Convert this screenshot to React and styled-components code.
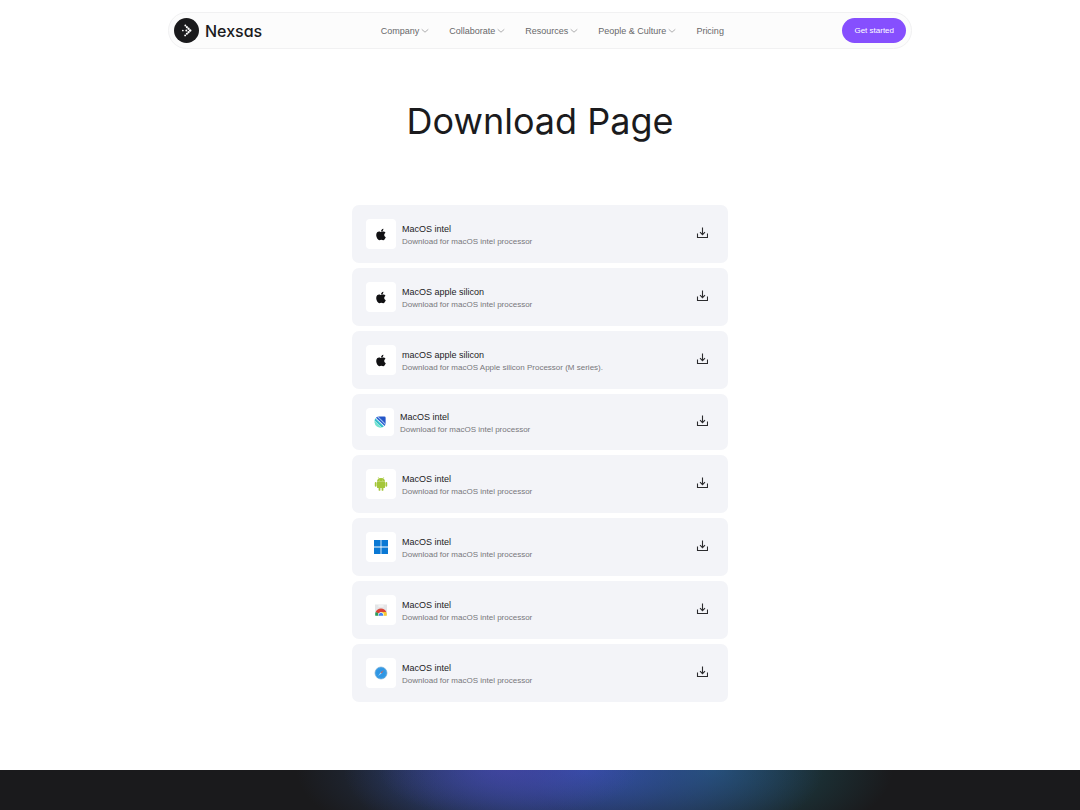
import styled, { createGlobalStyle } from "styled-components";

const GlobalStyle = createGlobalStyle`
    * {
        box-sizing: border-box;
    }

    body {
        margin: 0;
        background-color: #FFFFFF;
        color: #1B1B1D;
        font-family: "Liberation Sans", Arial, sans-serif;
    }
`;

const menu = [
    { label: "Company", dropdown: true },
    { label: "Collaborate", dropdown: true },
    { label: "Resources", dropdown: true },
    { label: "People & Culture", dropdown: true },
    { label: "Pricing", dropdown: false },
];

const downloads = [
    { id: 1, icon: "apple", title: "MacOS intel", text: "Download for macOS intel processor" },
    { id: 2, icon: "apple", title: "MacOS apple silicon", text: "Download for macOS intel processor" },
    { id: 3, icon: "apple", title: "macOS apple silicon", text: "Download for macOS Apple silicon Processor (M series)." },
    { id: 4, icon: "stripes", title: "MacOS intel", text: "Download for macOS intel processor", small: true },
    { id: 5, icon: "android", title: "MacOS intel", text: "Download for macOS intel processor" },
    { id: 6, icon: "windows", title: "MacOS intel", text: "Download for macOS intel processor" },
    { id: 7, icon: "store", title: "MacOS intel", text: "Download for macOS intel processor" },
    { id: 8, icon: "safari", title: "MacOS intel", text: "Download for macOS intel processor" },
];

function LogoMark() {
    return (
        <svg width="25" height="25" viewBox="0 0 26 26" aria-hidden="true">
            <circle cx="13" cy="13" r="13" fill="#1A1A1C" />
            <g fill="#FFFFFF">
                <circle cx="11.8" cy="7.8" r="1" />
                <circle cx="13.4" cy="9.5" r="1.1" />
                <circle cx="15.1" cy="11.2" r="1.2" />
                <circle cx="16.8" cy="13" r="1.3" />
                <circle cx="15.1" cy="14.8" r="1.2" />
                <circle cx="13.4" cy="16.4" r="1.1" />
                <circle cx="11.6" cy="18.1" r="1" />
                <circle cx="9.2" cy="13" r="0.9" />
                <circle cx="12.8" cy="13" r="1" />
            </g>
        </svg>
    );
}

function Chevron() {
    return (
        <svg width="8" height="8" viewBox="0 0 8 8" fill="none" stroke="#9A9A9C" strokeWidth="0.8" aria-hidden="true">
            <path d="M1 2.6 4 5.2 7 2.6" strokeLinecap="round" strokeLinejoin="round" />
        </svg>
    );
}

function DownloadIcon() {
    return (
        <svg width="12" height="12" viewBox="0 0 12 12" fill="none" stroke="#2B2B2E" aria-hidden="true">
            <path d="M1.500 6.500V10.500h10V6.500M6.500 0.500V7.500M4 5.200 6.500 7.700 9 5.200" strokeWidth="1.1" />
        </svg>
    );
}

function AppleIcon() {
    return (
        <svg width="12" height="13" viewBox="0 0 384 512" fill="#111113" aria-hidden="true">
            <path d="M318.700 268.700c-.2-36.700 16.400-64.400 50-84.800-18.800-26.900-47.200-41.700-84.700-44.600-35.500-2.800-74.300 20.700-88.500 20.700-15 0-49.400-19.700-76.400-19.700C63.300 141.200 4 184.800 4 273.500q0 39.300 14.400 81.200c12.800 36.700 59 126.700 107.200 125.200 25.200-.6 43-17.900 75.800-17.900 31.800 0 48.300 17.900 76.400 17.900 48.600-.7 90.400-82.500 102.600-119.300-65.200-30.700-61.700-90-61.700-91.900zm-56.600-164.200c27.300-32.400 24.800-61.900 24-72.500-24.100 1.400-52 16.400-67.900 34.900-17.500 19.800-27.800 44.300-25.600 71.900 26.100 2 49.900-11.400 69.500-34.300z" />
        </svg>
    );
}

function StripesIcon() {
    return (
        <svg width="12" height="12" viewBox="0 0 12 12" aria-hidden="true">
            <path d="M4 .6h6.400a1.200 1.200 0 0 1 1.200 1.200V8z" fill="#2456C8" />
            <path d="M4 .6 11.600 8l-.2.700L3.200.8z" fill="#9BBBF0" />
            <path d="M3.200.8 11.400 8.700 10.600 9.900 1.900 1.700z" fill="#2A62D2" />
            <path d="M1.300 2.300 9.900 10.500 7.800 11.500.5 4.500z" fill="#35BFCB" />
            <path d="M.5 4.700 7.500 11.500a5.800 5.800 0 0 1-7-5z" fill="#74E2CF" />
        </svg>
    );
}

function AndroidIcon() {
    return (
        <svg width="14" height="14" viewBox="0 0 14 14" fill="#A4C639" aria-hidden="true">
            <path d="M3 4.700a4 3.800 0 0 1 8 0z" />
            <path d="M4.300.4 5.400 2M9.700.4 8.600 2" stroke="#A4C639" strokeWidth="0.5" strokeLinecap="round" />
            <path d="M3 5.100h8v5.100a.9.9 0 0 1-.9.9H3.900a.9.9 0 0 1-.9-.9z" />
            <rect x="0.8" y="5" width="1.8" height="4.7" rx="0.9" />
            <rect x="11.4" y="5" width="1.8" height="4.7" rx="0.9" />
            <rect x="4.6" y="9.5" width="1.8" height="4.3" rx="0.9" />
            <rect x="7.6" y="9.5" width="1.8" height="4.3" rx="0.9" />
            <circle cx="5.2" cy="3.1" r="0.35" fill="#FFFFFF" />
            <circle cx="8.8" cy="3.1" r="0.35" fill="#FFFFFF" />
        </svg>
    );
}

function WindowsIcon() {
    return (
        <svg width="14" height="14" viewBox="0 0 14 14" fill="#0A78D4" aria-hidden="true">
            <path d="M0 0h6.600v6.600H0zM7.400 0H14v6.600H7.400zM0 7.400h6.600V14H0zM7.400 7.400H14V14H7.400z" />
        </svg>
    );
}

function StoreIcon() {
    return (
        <svg width="14" height="14" viewBox="0 0 14 14" aria-hidden="true">
            <path d="M1 1.500h12v10.600a.6.6 0 0 1-.6.6H1.600a.6.6 0 0 1-.6-.6z" fill="#E4E5E7" />
            <path d="M4.800 3h4.400" stroke="#FFFFFF" strokeWidth="0.9" strokeLinecap="round" />
            <path d="M1.700 9a5.700 5.700 0 0 1 10.600 0H7L4.500 10.800z" fill="#DB4437" />
            <path d="M1.700 9a6 6 0 0 0-.4 3.700H6L4.500 10.200z" fill="#2D9D5B" />
            <path d="M7 9h5.300a6 6 0 0 1 .4 3.700H8z" fill="#F7C934" />
            <path d="M4.300 12.700a2.800 2.800 0 1 1 5.400 0z" fill="#FFFFFF" />
            <path d="M4.900 12.700a2.200 2.200 0 1 1 4.200 0z" fill="#4285F4" />
        </svg>
    );
}

function SafariIcon() {
    return (
        <svg width="14" height="14" viewBox="0 0 14 14" aria-hidden="true">
            <circle cx="7" cy="7" r="6" fill="#2E96E4" stroke="#7DAFD4" strokeWidth="0.7" />
            <circle cx="7" cy="7" r="4.8" fill="none" stroke="#65BDF5" strokeWidth="0.5" strokeDasharray="0.4 0.8" />
            <path d="M9.900 4 7.600 7.600 6.500 6.500z" fill="#D0655F" />
            <path d="M4.100 10 6.500 6.500l1.100 1.100z" fill="#A9D8F7" />
        </svg>
    );
}

const icons = {
    apple: <AppleIcon />,
    stripes: <StripesIcon />,
    android: <AndroidIcon />,
    windows: <WindowsIcon />,
    store: <StoreIcon />,
    safari: <SafariIcon />,
};

function App() {
    return (
        <>
        <GlobalStyle />
        <Page>
            <Header>
                <Logo href="#">
                    <LogoMark />
                    Nexsas
                </Logo>
                <Nav>
                    {menu.map((item) => (
                        <NavLink href="#" key={item.label}>
                            {item.label}
                            {item.dropdown && <Chevron />}
                        </NavLink>
                    ))}
                </Nav>
                <StartButton>Get started</StartButton>
            </Header>
            <Main>
                <Title>Download Page</Title>
                <List>
                    {downloads.map((item) => (
                        <Row key={item.id}>
                            <IconTile $small={item.small}>{icons[item.icon]}</IconTile>
                            <RowBody>
                                <RowTitle>{item.title}</RowTitle>
                                <RowText>{item.text}</RowText>
                            </RowBody>
                            <DownloadButton aria-label={`Download ${item.title}`}>
                                <DownloadIcon />
                            </DownloadButton>
                        </Row>
                    ))}
                </List>
            </Main>
            <Footer />
        </Page>
        </>
    );
}

export default App;

const Page = styled.div`
    display: flex;
    flex-direction: column;
    min-height: 100vh;
    padding-top: 12px;
`;

const Header = styled.header`
    display: flex;
    align-items: center;
    justify-content: space-between;
    width: 100%;
    max-width: 744px;
    margin: 0 auto;
    padding: 5px;
    background-color: #FCFCFC;
    border: 1px solid #F1F1F2;
    border-radius: 20px;
`;

const Logo = styled.a`
    display: flex;
    align-items: center;
    gap: 6px;
    color: #1B1B1D;
    font-family: Inter, sans-serif;
    font-size: 16px;
    font-weight: 500;
    line-height: 24px;
    font-feature-settings: "cv11";
    text-decoration: none;
`;

const Nav = styled.nav`
    display: flex;
    align-items: center;
    gap: 20px;
`;

const NavLink = styled.a`
    display: flex;
    align-items: center;
    gap: 2px;
    color: #68686A;
    font-size: 9px;
    line-height: 12px;
    text-decoration: none;
`;

const StartButton = styled.button`
    height: 25px;
    padding: 0 12px;
    background-color: #864FFE;
    color: #FFFFFF;
    font-family: inherit;
    font-size: 8px;
    border: none;
    border-radius: 20px;
    cursor: pointer;
`;

const Main = styled.main`
    display: flex;
    flex-direction: column;
    align-items: center;
    padding: 48px 16px 68px;
`;

const Title = styled.h1`
    margin: 0 0 60px;
    font-family: Inter, sans-serif;
    font-size: 36px;
    font-weight: 400;
    line-height: 48px;
`;

const List = styled.ul`
    display: flex;
    flex-direction: column;
    gap: 5px;
    width: 100%;
    max-width: 376px;
    margin: 0;
    padding: 0;
    list-style: none;
`;

const Row = styled.li`
    display: flex;
    align-items: center;
    gap: 6px;
    padding: 14px;
    background-color: #F3F4F8;
    border-radius: 7px;
`;

const IconTile = styled.div`
    display: flex;
    align-items: center;
    justify-content: center;
    width: ${(props) => (props.$small ? "28px" : "30px")};
    height: ${(props) => (props.$small ? "28px" : "30px")};
    background-color: #FFFFFF;
    border-radius: 4px;
`;

const RowBody = styled.div`
    flex: 1;
    padding-top: 2px;
`;

const RowTitle = styled.h2`
    margin: 0;
    font-size: 9px;
    font-weight: 400;
    line-height: 14px;
`;

const RowText = styled.p`
    margin: 0;
    color: #77777B;
    font-size: 8px;
    line-height: 12px;
`;

const DownloadButton = styled.button`
    display: flex;
    padding: 4px 6px 6px;
    background: none;
    border: none;
    cursor: pointer;
`;

const Footer = styled.footer`
    flex: 1;
    min-height: 40px;
    background-color: #1A1A1C;
    background-image:
        radial-gradient(ellipse 130px 50px at 47% 0, rgba(76, 66, 170, 0.55), transparent),
        radial-gradient(ellipse 240px 90px at 54% 0, rgba(56, 84, 190, 0.8), transparent),
        radial-gradient(ellipse 180px 80px at 66% 0, rgba(30, 110, 125, 0.6), transparent),
        radial-gradient(ellipse 190px 80px at 45% 0, rgba(44, 72, 120, 0.7), transparent);
`;
